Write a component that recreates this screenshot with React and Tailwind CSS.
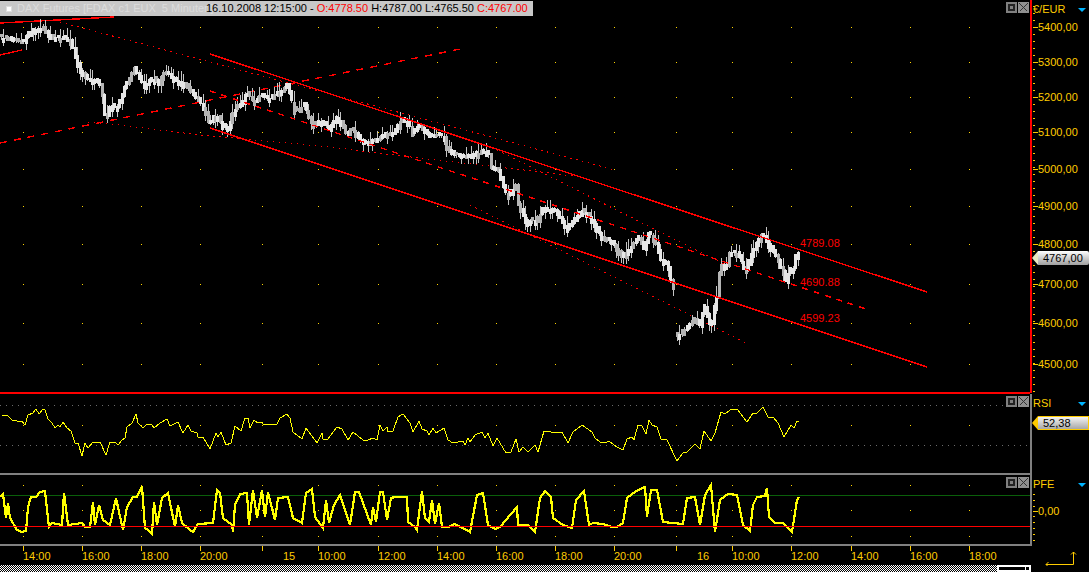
const YEL = "#ffcc00";
const RED = "#ff0000";

const GRID_X = [23, 82, 141, 200, 262, 318, 378, 437, 496, 555, 614, 676, 732, 791, 851, 910, 969];
const PRICE_Y = [27, 62, 97, 132, 169, 206, 244, 284, 323, 364];
const PRICES = ["5400,00", "5300,00", "5200,00", "5100,00", "5000,00", "4900,00", "4800,00", "4700,00", "4600,00", "4500,00"];
const TIMES = [
  [23, "14:00"], [82, "16:00"], [141, "18:00"], [200, "20:00"], [283, "15"], [318, "10:00"], [378, "12:00"],
  [437, "14:00"], [496, "16:00"], [555, "18:00"], [614, "20:00"], [697, "16"], [732, "10:00"], [791, "12:00"],
  [851, "14:00"], [910, "16:00"], [969, "18:00"],
];

// price path, page pixels, before and after the gap at the open on the 16th
const PATH_A = [
  [0, 37], [10, 38], [15, 40], [25, 41], [28, 34], [34, 30], [41, 28], [44, 26], [48, 33], [55, 38], [62, 37], [68, 37],
  [72, 41], [75, 50], [78, 60], [81, 70], [85, 74], [88, 78], [95, 80], [100, 82], [103, 92], [105, 110], [107, 117],
  [112, 104], [117, 108], [122, 98], [125, 88], [130, 80], [135, 68], [140, 76], [145, 85], [150, 80], [155, 78], [160, 82],
  [165, 72], [170, 74], [175, 78], [180, 80], [185, 84], [190, 88], [195, 95], [200, 100], [203, 105], [207, 113],
  [210, 125], [215, 115], [220, 118], [225, 128], [230, 125], [233, 113], [238, 106], [243, 102], [247, 92], [252, 98],
  [257, 100], [262, 94], [267, 98], [272, 97], [278, 92], [284, 90], [288, 85], [292, 98], [295, 108], [300, 110],
  [305, 105], [310, 117], [315, 125], [320, 120], [330, 127], [337, 117], [343, 123], [348, 135], [353, 128], [363, 142],
  [377, 140], [387, 133], [395, 132], [402, 118], [410, 123], [413, 133], [420, 125], [430, 135], [445, 135], [448, 148],
  [455, 155], [470, 155], [483, 150], [490, 155], [492, 167], [500, 170], [503, 183], [508, 195], [517, 185], [519, 203],
  [528, 222], [538, 218], [545, 207], [557, 210], [568, 228], [577, 217], [583, 210], [592, 217], [603, 238], [613, 242],
  [623, 255], [633, 245], [640, 237], [645, 247], [650, 232], [657, 243], [662, 260], [668, 263], [673, 287],
];
const PATH_B = [
  [676, 338], [682, 333], [690, 325], [697, 317], [700, 328], [705, 305], [712, 327], [715, 307], [719, 290], [721, 263],
  [727, 268], [730, 253], [738, 252], [747, 270], [753, 250], [763, 233], [772, 247], [778, 257], [785, 273], [787, 280],
  [790, 270], [795, 267], [797, 253],
];

// rsi and pfe points, read off as page x,y
const RSI = [
  [2, 415], [7, 415], [12, 420], [17, 421], [18, 422], [22, 421], [25, 425], [28, 415], [33, 413], [36, 409], [39, 414], [43, 409],
  [45, 410], [48, 419], [52, 423], [55, 428], [58, 425], [60, 427], [63, 422], [67, 428], [71, 431], [75, 443], [78, 443], [82, 456],
  [85, 443], [88, 448], [93, 442], [100, 442], [106, 455], [110, 442], [115, 442], [118, 445], [122, 440], [125, 438], [127, 427],
  [132, 423], [136, 414], [138, 423], [143, 428], [147, 424], [152, 425], [154, 428], [160, 423], [167, 419], [170, 426], [178, 422],
  [183, 433], [188, 425], [191, 431], [197, 433], [198, 437], [203, 437], [210, 449], [216, 433], [218, 437], [221, 432], [226, 445],
  [231, 443], [235, 426], [241, 431], [245, 418], [248, 418], [250, 428], [254, 420], [258, 423], [262, 422], [263, 424], [277, 424],
  [280, 418], [287, 414], [290, 418], [293, 432], [302, 439], [306, 428], [317, 443], [322, 433], [323, 439], [328, 439], [337, 427],
  [342, 429], [348, 440], [353, 432], [363, 440], [368, 440], [373, 438], [377, 440], [380, 425], [383, 431], [387, 427], [388, 432],
  [393, 431], [398, 417], [403, 414], [410, 423], [413, 432], [419, 421], [422, 429], [427, 431], [429, 435], [433, 428], [436, 433],
  [444, 428], [448, 440], [453, 443], [463, 441], [465, 445], [468, 438], [470, 442], [475, 435], [482, 432], [485, 438], [488, 433],
  [493, 446], [497, 438], [506, 453], [511, 452], [516, 439], [519, 452], [523, 447], [528, 452], [535, 445], [538, 452], [544, 431],
  [557, 433], [562, 432], [568, 443], [573, 432], [582, 425], [592, 432], [595, 438], [600, 442], [605, 443], [609, 441], [617, 447],
  [623, 450], [627, 439], [632, 437], [634, 440], [638, 425], [642, 426], [646, 434], [649, 420], [652, 425], [657, 427], [661, 439],
  [667, 440], [677, 461], [683, 453], [687, 452], [695, 444], [700, 449], [704, 431], [711, 441], [715, 433], [721, 412], [725, 414],
  [730, 410], [737, 409], [747, 422], [753, 413], [757, 413], [763, 407], [768, 417], [773, 417], [778, 423], [784, 437], [791, 425],
  [794, 428], [797, 421], [799, 421],
];
const PFE = [
  [0, 497], [3, 494], [6, 518], [8, 503], [10, 518], [17, 530], [22, 532], [26, 531], [28, 507], [31, 497], [36, 497], [40, 492],
  [45, 491], [49, 527], [52, 523], [62, 525], [64, 493], [68, 525], [82, 523], [85, 527], [90, 527], [93, 502], [95, 525], [99, 505],
  [103, 520], [110, 525], [116, 498], [123, 530], [127, 507], [133, 497], [137, 497], [142, 486], [145, 528], [148, 530], [152, 534],
  [154, 502], [157, 525], [162, 498], [168, 493], [175, 527], [178, 505], [182, 523], [190, 530], [193, 532], [198, 524], [213, 523],
  [217, 490], [220, 493], [223, 518], [232, 525], [233, 532], [235, 505], [240, 494], [247, 493], [249, 525], [253, 490], [257, 518],
  [262, 490], [265, 517], [268, 492], [275, 520], [278, 498], [288, 497], [293, 518], [302, 523], [306, 493], [312, 489], [315, 517],
  [323, 528], [326, 500], [329, 523], [334, 505], [340, 495], [350, 525], [355, 492], [359, 492], [371, 525], [373, 507], [376, 522],
  [380, 492], [383, 492], [387, 520], [391, 498], [395, 497], [400, 497], [407, 497], [408, 522], [415, 527], [417, 530], [422, 491],
  [425, 518], [429, 522], [432, 500], [435, 524], [439, 503], [442, 527], [448, 527], [455, 524], [470, 532], [477, 495], [483, 493],
  [488, 525], [495, 529], [500, 527], [517, 507], [518, 525], [528, 525], [535, 532], [540, 498], [545, 491], [551, 497], [553, 518],
  [563, 525], [572, 528], [576, 500], [584, 491], [589, 525], [593, 523], [603, 524], [612, 527], [617, 527], [623, 523], [627, 498],
  [635, 492], [645, 487], [647, 517], [651, 490], [657, 490], [663, 522], [683, 524], [687, 498], [695, 497], [700, 525], [705, 495],
  [711, 485], [715, 532], [720, 500], [728, 494], [737, 495], [743, 525], [750, 531], [753, 505], [757, 497], [765, 496], [767, 488],
  [769, 517], [775, 523], [783, 523], [792, 532], [797, 500], [799, 497],
];

const pts = (list) => list.map(([x, y]) => `${x},${y}`).join(" ");

function interp(path, x) {
  for (let i = 1; i < path.length; i++) {
    if (x <= path[i][0]) {
      const [x0, y0] = path[i - 1];
      const [x1, y1] = path[i];
      return y0 + ((y1 - y0) * (x - x0)) / (x1 - x0);
    }
  }
  return path[path.length - 1][1];
}

function candles(path) {
  const out = [];
  const end = path[path.length - 1][0];
  let i = 0;
  for (let x = path[0][0]; x <= end; x += 2.46, i++) {
    const a = interp(path, x);
    const b = interp(path, x + 2.46);
    // fixed pseudo random, so the bodies and wicks stay put
    const r = Math.abs(Math.sin(i * 12.9898) * 43758.5453) % 1;
    const r2 = Math.abs(Math.sin(i * 78.233) * 12345.678) % 1;
    const j = (r + r2 - 1) * 2.5;
    out.push({
      x: Math.round(x),
      top: Math.round(Math.min(a, b) - 1 + j),
      h: Math.round(Math.abs(a - b) + 3 + r2 * 2),
      wt: Math.round(Math.min(a, b) - 2 - (r > 0.6 ? 1 + r * 6 : 0)),
      wb: Math.round(Math.max(a, b) + 3 + (r2 > 0.68 ? 1 + r2 * 7 : 0)),
      light: (i * 7 + Math.round(r * 10)) % 3 !== 0,
    });
  }
  return out;
}

function Candles({ path }) {
  const list = candles(path);
  return (
    <g shapeRendering="crispEdges">
      {list.map((c, i) => <rect key={`w${i}`} x={c.x + 1} y={c.wt} width="1" height={c.wb - c.wt} fill="#c4c4c4" />)}
      {list.map((c, i) => <rect key={i} x={c.x} y={c.top} width="3" height={c.h} fill={c.light ? "#e6e6e6" : "#b4b4b4"} />)}
    </g>
  );
}

function Dots({ ys, color = "#ffd400" }) {
  return GRID_X.flatMap((x) => ys.map((y) => <rect key={`${x}-${y}`} x={x} y={y} width="1" height="1" fill={color} />));
}

function WinButtons() {
  return (
    <div className="absolute right-px top-[2px] flex gap-px">
      <div className="flex h-[11px] w-[11px] items-center justify-center bg-[#808080]">
        <div className="h-[7px] w-[7px] border-2 border-[#222]" />
      </div>
      <div className="flex h-[11px] w-[11px] items-center justify-center bg-[#909090]">
        <svg width="9" height="9" viewBox="0 0 9 9" stroke="#333" strokeWidth="1" shapeRendering="crispEdges">
          <path d="M0.5 0.5 8.5 8.5M8.5 0.5 0.5 8.5" />
        </svg>
      </div>
    </div>
  );
}

function Arrow() {
  return <div className="h-0 w-0 border-x-[4px] border-t-[4px] border-x-transparent border-t-[#00b4ff]" />;
}

function AxisHead({ label, pad }) {
  return (
    <div className={`flex items-center justify-between pr-[3px] pt-[3px] text-[11px] leading-[13px] text-[#ffcc00] ${pad}`}>
      <span>{label}</span>
      <Arrow />
    </div>
  );
}

export default function App() {
  const ticks = [];
  for (let y = 6; y < 393; y += 7) ticks.push(y);

  return (
    <div className="h-[572px] w-[1089px] overflow-hidden bg-black font-['Liberation_Sans',Arial,sans-serif]">
      {/* main price panel */}
      <div className="flex h-[394px]">
        <div className="relative h-full w-[1030px]">
          <svg width="1030" height="394" viewBox="0 0 1030 394" className="block">
            <Dots ys={PRICE_Y} />
            <g fill="none" stroke={RED} shapeRendering="crispEdges">
              <path d="M0 23 114 17 M0 55 22 50" strokeWidth="1.4" />
              <path d="M0 143 465 48" strokeWidth="1.4" strokeDasharray="7 7" />
              <path d="M60 22 615 170" strokeDasharray="1.5 4.5" />
              <polyline points="88,122 120,125 200,135 330,147 377,153 453,162 533,171 573,176" strokeDasharray="1.5 4.5" />
              <path d="M470 205 748 344" strokeDasharray="1.5 4.5" />
              <path d="M497 150 730 267" strokeDasharray="1.5 4.5" />
            </g>
            <Candles path={PATH_A} />
            <Candles path={PATH_B} />
            <g fill="none" stroke={RED} strokeWidth="1.4" shapeRendering="crispEdges">
              <path d="M210 54 927 292" />
              <path d="M210 128 927 367" />
              <path d="M210 91 866 309" strokeDasharray="6 6" />
            </g>
            <g fill={RED} fontSize="11">
              <text x="800" y="247">4789.08</text>
              <text x="800" y="286">4690.88</text>
              <text x="800" y="322">4599.23</text>
            </g>
            <rect x="0" y="392" width="1030" height="2" fill={RED} />
          </svg>

          {/* title strip */}
          <div className="absolute left-0 top-px flex h-[15px] w-[533px] items-center whitespace-pre bg-[#c8c8c8] pl-[6px] text-[11px] leading-none text-black">
            <span className="mr-[5px] h-[6px] w-[6px] border border-[#dddddd] bg-white" />
            <span className="w-[189px] text-[#dcdcdc]">DAX Futures [FDAX c1 EUX  5 Minuten]</span>
            <span>16.10.2008 12:15:00 - </span>
            <span className="text-[#ff0000]">O:4778.50 </span>
            <span>H:4787.00 L:4765.50 </span>
            <span className="text-[#ff0000]">C:4767.00</span>
          </div>
          <WinButtons />
        </div>

        <div className="relative h-full w-[59px]">
          <svg width="59" height="394" viewBox="1030 0 59 394" className="absolute left-0 top-0 block">
            <rect x="1030" y="0" width="2" height="393" fill={RED} />
            {ticks.map((y) => <rect key={y} x="1033" y={y} width="2" height="1" fill={YEL} />)}
            {PRICE_Y.map((y, i) => (
              <g key={y}>
                <rect x="1033" y={y} width="5" height="1" fill={YEL} />
                <text x="1038" y={y + 4} fontSize="11" fill={YEL}>{PRICES[i]}</text>
              </g>
            ))}
          </svg>
          <div className="relative"><AxisHead label="€/EUR" pad="pl-[3px]" /></div>
          {/* last price tag */}
          <div className="absolute left-[2px] top-[251px] flex items-center">
            <div className="h-0 w-0 border-y-[7px] border-r-[6px] border-y-transparent border-r-[#e8e8c0]" />
            <div className="flex h-[14px] w-[51px] items-center rounded-r-[2px] bg-gradient-to-b from-[#ffffff] to-[#a0a0a0] pl-[5px] text-[11px] text-black">
              4767,00
            </div>
          </div>
        </div>
      </div>

      {/* RSI */}
      <div className="flex h-[81px]">
        <div className="relative h-full w-[1032px] border-r-2 border-[#808080]">
          <svg width="1030" height="81" viewBox="0 394 1030 81" className="block">
            <Dots ys={[425]} />
            <path d="M0 405.5H1030M0 445.5H1030" stroke="#6a6a6a" strokeDasharray="1 5" />
            <polyline points={pts(RSI)} fill="none" stroke="#ffff00" shapeRendering="crispEdges" />
            <rect x="0" y="473" width="1030" height="2" fill="#808080" />
          </svg>
          <WinButtons />
        </div>
        <div className="relative flex-1">
          <AxisHead label="RSI" pad="pl-px" />
          {/* last rsi tag */}
          <div className="absolute left-0 top-[22px] flex items-center">
            <div className="h-0 w-0 border-y-[7px] border-r-[6px] border-y-transparent border-r-[#ffcc00]" />
            <div className="flex h-[14px] w-[51px] items-center border border-l-0 border-[#ffcc00] bg-gradient-to-b from-[#f4f4f4] to-[#a8a8a8] pl-[5px] text-[11px] text-black">
              52,38
            </div>
          </div>
        </div>
      </div>

      {/* PFE */}
      <div className="flex h-[71px]">
        <div className="relative h-full w-[1032px] border-r-2 border-b-2 border-[#808080]">
          <svg width="1030" height="69" viewBox="0 475 1030 69" className="block">
            <Dots ys={[485, 510, 536]} />
            <path d="M0 495.5H1030" stroke="#0a5f0a" />
            <polyline points={pts(PFE)} fill="none" stroke="#ffff00" strokeWidth="2.2" shapeRendering="crispEdges" />
            <path d="M0 526.5H1030" stroke={RED} />
          </svg>
          <WinButtons />
        </div>
        <div className="relative flex-1">
          <AxisHead label="PFE" pad="pl-px" />
          <svg width="57" height="50" viewBox="1032 492 57 50" className="absolute left-0 top-[17px]">
            {[494, 500, 506, 516, 522, 528, 534, 540].map((y) => <rect key={y} x="1033" y={y} width="2" height="1" fill={YEL} />)}
            <rect x="1033" y="511" width="5" height="1" fill={YEL} />
            <text x="1038" y="515" fontSize="11" fill={YEL}>0,00</text>
          </svg>
        </div>
      </div>

      {/* time axis */}
      <div className="flex h-[20px]">
        <svg width="1030" height="20" viewBox="0 546 1030 20" className="block">
          {GRID_X.map((x) => <rect key={x} x={x} y="546" width="1" height="5" fill={YEL} />)}
          {TIMES.map(([x, t]) => <text key={`${x}${t}`} x={x} y="560" fontSize="11" fill={YEL}>{t}</text>)}
        </svg>
        <svg width="59" height="20" viewBox="1030 546 59 20" fill="none" stroke={YEL} className="block">
          <path d="M1073.5 552V564.5H1046" />
          <path d="M1071 554.5 1073.5 552 1076 554.5M1048.5 562 1046 564.5 1048.5 567" />
        </svg>
      </div>

      {/* scroller */}
      <div className="flex h-[7px] w-[1031px] -mt-px">
        <div className="h-full flex-1 bg-[repeating-conic-gradient(#ffffff_0_25%,#000000_0_50%)] bg-[length:2px_2px]" />
        <div className="flex h-full w-[34px] items-center justify-end border-2 border-white bg-black">
          <div className="h-[3px] w-[3px] bg-black outline outline-1 outline-white" />
        </div>
      </div>
    </div>
  );
}
